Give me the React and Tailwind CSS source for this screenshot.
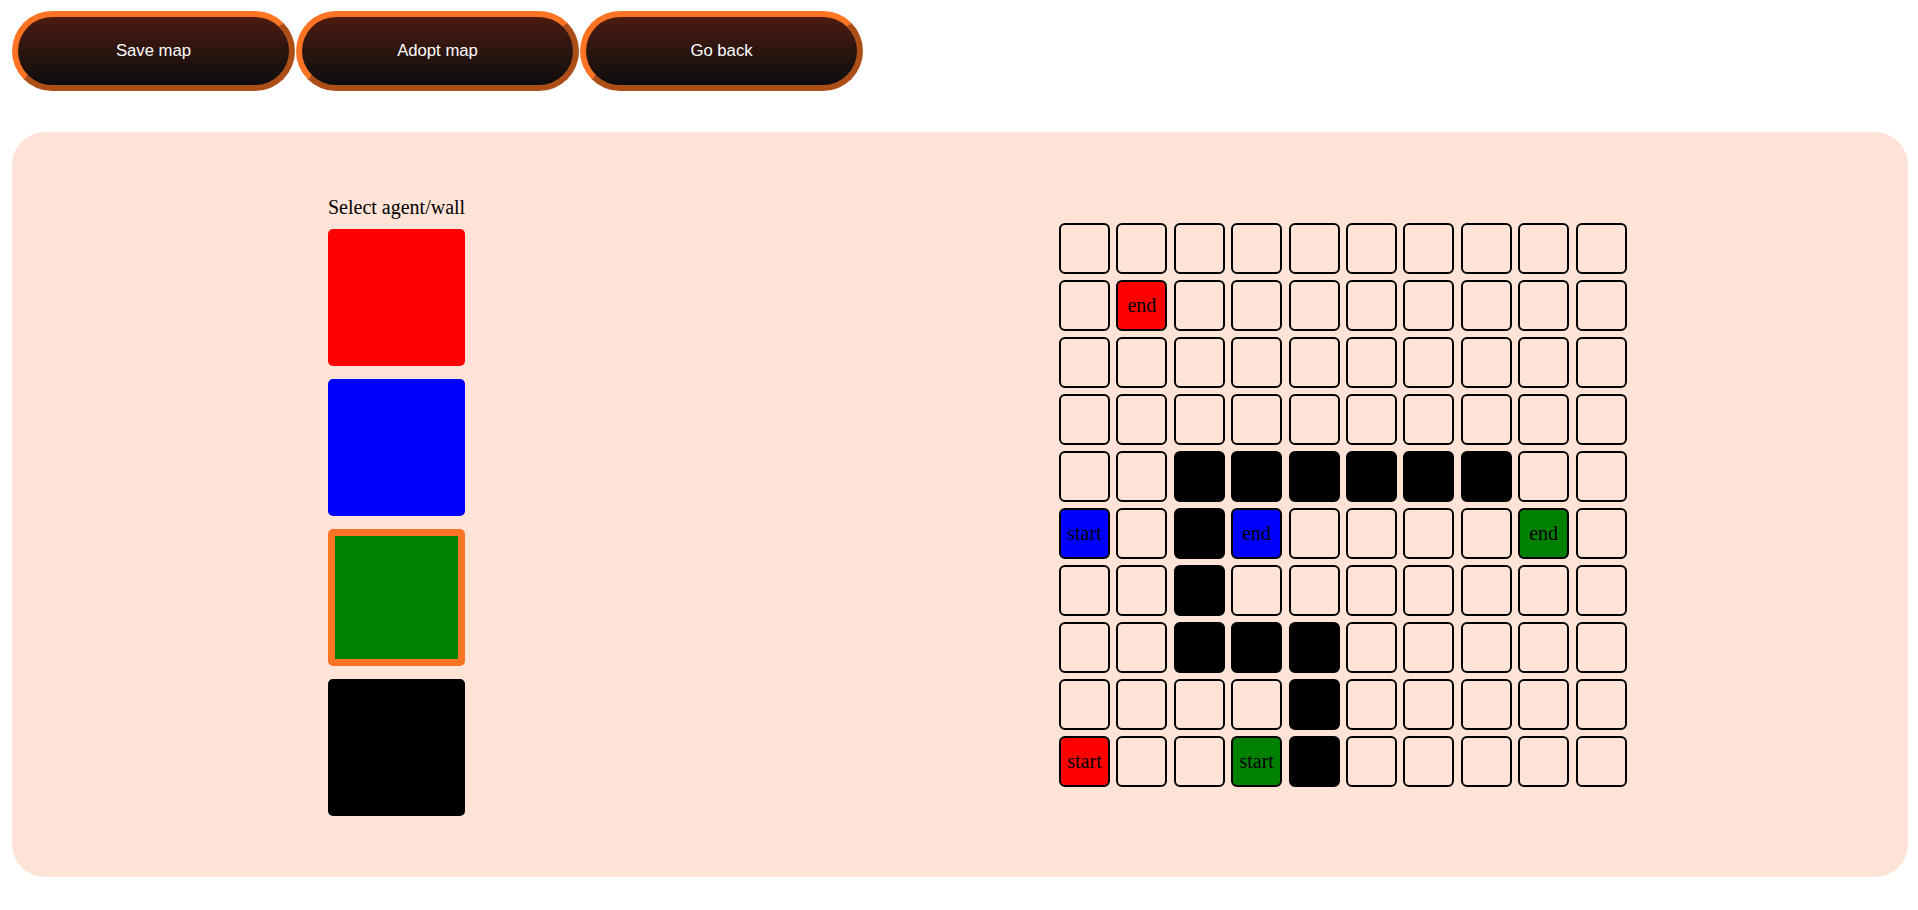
import React, { useState } from "react";

const SIZE = 10;

// cell types: "" empty, "wall", or agent colour with start/end
const initialCells = () => {
  const cells = Array.from({ length: SIZE * SIZE }, () => ({ type: "", label: "" }));
  const set = (r, c, type, label = "") => {
    cells[r * SIZE + c] = { type, label };
  };
  set(1, 1, "red", "end");
  set(4, 2, "wall");
  set(4, 3, "wall");
  set(4, 4, "wall");
  set(4, 5, "wall");
  set(4, 6, "wall");
  set(4, 7, "wall");
  set(5, 0, "blue", "start");
  set(5, 2, "wall");
  set(5, 3, "blue", "end");
  set(5, 8, "green", "end");
  set(6, 2, "wall");
  set(7, 2, "wall");
  set(7, 3, "wall");
  set(7, 4, "wall");
  set(8, 4, "wall");
  set(9, 0, "red", "start");
  set(9, 3, "green", "start");
  set(9, 4, "wall");
  return cells;
};

const cellColors = {
  "": "bg-transparent",
  red: "bg-[#ff0000]",
  blue: "bg-[#0000ff]",
  green: "bg-[#008000]",
  wall: "bg-black",
};

const palette = [
  { key: "red", className: "bg-[#ff0000]" },
  { key: "blue", className: "bg-[#0000ff]" },
  { key: "green", className: "bg-[#008000]" },
  { key: "wall", className: "bg-black" },
];

function MapButton({ children }) {
  return (
    <button className="w-[283px] h-[80px] rounded-full border-[6px] [border-style:outset] border-[#ff7424] bg-linear-to-b from-[#4d1a10] to-[#0d0d0d] text-white text-[16.7px] font-['Liberation_Sans',Arial,sans-serif]">
      {children}
    </button>
  );
}

export default function App() {
  const [cells, setCells] = useState(initialCells);
  const [selected, setSelected] = useState("green");

  const paint = (i) => {
    setCells((prev) => prev.map((c, j) => (j === i ? { type: selected, label: c.label } : c)));
  };

  return (
    <div className="min-h-screen bg-white font-['Liberation_Serif','Times_New_Roman',serif]">
      {/* top buttons */}
      <div className="flex gap-[1px] pl-[12px] pt-[11px]">
        <MapButton>Save map</MapButton>
        <MapButton>Adopt map</MapButton>
        <MapButton>Go back</MapButton>
      </div>

      {/* editor panel */}
      <div className="mt-[41px] ml-[12px] w-[1896px] h-[745px] rounded-[33px] bg-[#ffe3d7] flex items-center pl-[316px]">
        <div className="flex flex-col w-[137px] pt-[3px]">
          <p className="text-[20px] leading-[23px] text-black whitespace-nowrap mb-[10px]">Select agent/wall</p>
          <div className="flex flex-col gap-[13px]">
            {palette.map((p) => (
              <button
                key={p.key}
                onClick={() => setSelected(p.key)}
                className={`w-[137px] h-[137px] rounded-[5px] ${p.className} ${
                  selected === p.key ? "border-[7px] border-[#ff7424]" : ""
                }`}
              />
            ))}
          </div>
        </div>

        <div className="ml-[594px] grid grid-cols-[repeat(10,51px)] gap-x-[6.4px] gap-y-[6px]">
          {cells.map((c, i) => (
            <button
              key={i}
              onClick={() => paint(i)}
              className={`w-[51px] h-[51px] rounded-[6px] border-2 border-black flex items-center justify-center text-[20px] text-black leading-none ${cellColors[c.type]}`}
            >
              {c.label}
            </button>
          ))}
        </div>
      </div>
    </div>
  );
}
